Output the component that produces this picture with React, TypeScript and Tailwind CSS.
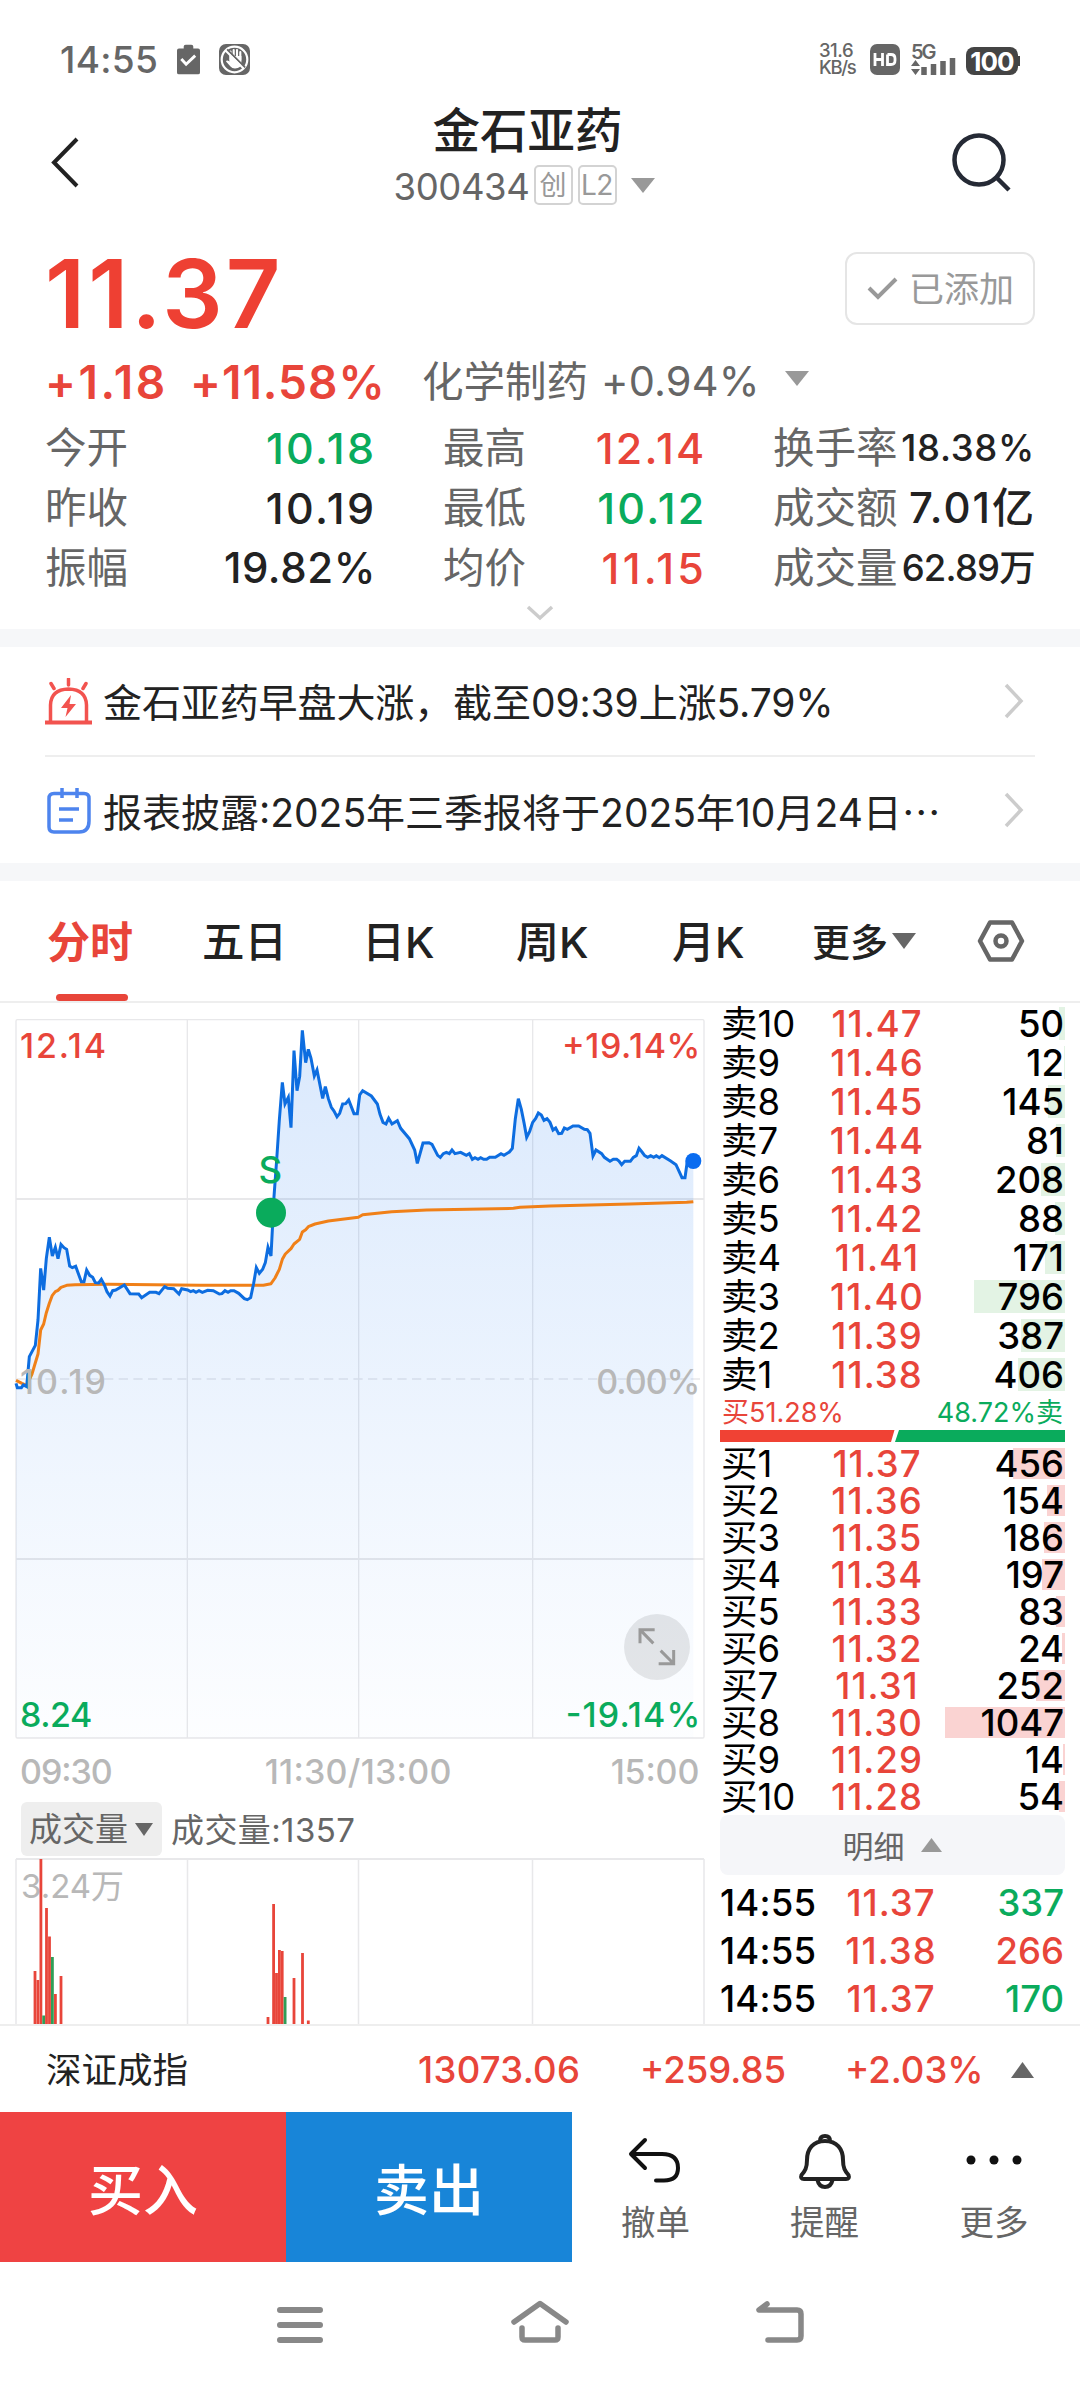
import React from "react";

const RED = "#e8453a";
const GREEN = "#0aab5c";

const tone: Record<string, string> = {
  r: "text-[#e8453a]",
  g: "text-[#0aab5c]",
  k: "text-[#222222]",
};

type Stat = { label: string; value: string; c: string; size: string };

const stats: Stat[][] = [
  [
    { label: "今开", value: "10.18", c: "g", size: "text-[43px] tracking-[2.4px] -mr-[3.5px]" },
    { label: "最高", value: "12.14", c: "r", size: "text-[43px] tracking-[2.2px] -mr-[2.4px]" },
    { label: "换手率", value: "18.38%", c: "k", size: "text-[36.5px] tracking-[0.7px]" },
  ],
  [
    { label: "昨收", value: "10.19", c: "k", size: "text-[43px] tracking-[2.4px] -mr-[3.5px]" },
    { label: "最低", value: "10.12", c: "g", size: "text-[43px] tracking-[2.2px] -mr-[2.4px]" },
    { label: "成交额", value: "7.01亿", c: "k", size: "text-[42px] tracking-[2px] -mr-[1px]" },
  ],
  [
    { label: "振幅", value: "19.82%", c: "k", size: "text-[42px] tracking-[0.6px] -mr-[3px]" },
    { label: "均价", value: "11.15", c: "r", size: "text-[43px] tracking-[3.2px] -mr-[3px]" },
    { label: "成交量", value: "62.89万", c: "k", size: "text-[36.5px] tracking-[-0.8px]" },
  ],
];

const sells: [string, string, number][] = [
  ["卖10", "11.47", 50], ["卖9", "11.46", 12], ["卖8", "11.45", 145], ["卖7", "11.44", 81], ["卖6", "11.43", 208],
  ["卖5", "11.42", 88], ["卖4", "11.41", 171], ["卖3", "11.40", 796], ["卖2", "11.39", 387], ["卖1", "11.38", 406],
];
const buys: [string, string, number][] = [
  ["买1", "11.37", 456], ["买2", "11.36", 154], ["买3", "11.35", 186], ["买4", "11.34", 197], ["买5", "11.33", 83],
  ["买6", "11.32", 24], ["买7", "11.31", 252], ["买8", "11.30", 1047], ["买9", "11.29", 14], ["买10", "11.28", 54],
];
const ticks: [string, string, string, string][] = [
  ["14:55", "11.37", "337", "g"],
  ["14:55", "11.38", "266", "r"],
  ["14:55", "11.37", "170", "g"],
];

const pricePoints =
  "48,1150 52,1163 64,1163 70,1155 80,1160 88,1070 106,1036 114,960 122,805 131,870 139,775 148,712 157,768 166,742 174,776 183,733 192,743 200,748 209,798 217,803 227,799 244,845 252,845 260,810 269,826 278,832 286,848 296,849 304,838 313,855 321,875 330,888 338,872 347,870 373,855 390,881 416,882 425,893 449,877 468,877 477,881 494,860 503,865 521,866 537,882 545,866 563,870 572,875 580,872 588,877 597,872 607,877 623,871 640,872 658,882 666,881 675,872 684,877 692,872 702,872 716,880 733,896 742,899 752,893 761,850 769,803 778,820 788,808 796,788 804,742 813,768 817,690 822,590 830,480 838,360 847,247 855,312 865,292 873,383 882,152 891,272 899,230 907,91 917,188 925,148 933,175 943,228 951,210 968,295 976,260 985,296 994,322 1002,333 1011,350 1019,340 1028,312 1037,311 1046,300 1062,341 1072,341 1079,285 1088,272 1114,288 1132,312 1140,343 1149,367 1158,372 1166,355 1176,372 1192,362 1202,385 1228,416 1244,450 1252,490 1269,429 1287,428 1296,433 1313,466 1321,472 1330,461 1339,457 1348,461 1356,450 1365,461 1382,457 1399,466 1408,461 1417,478 1425,473 1434,478 1442,473 1451,478 1460,478 1469,472 1486,472 1503,461 1512,466 1528,456 1537,445 1546,356 1555,296 1564,328 1572,368 1580,412 1589,394 1598,367 1607,355 1615,339 1624,345 1632,361 1641,356 1650,367 1659,390 1667,384 1676,401 1685,400 1693,384 1702,388 1719,378 1736,378 1753,388 1762,389 1770,400 1779,468 1788,450 1805,461 1813,472 1830,484 1840,478 1850,478 1857,483 1865,494 1874,484 1891,484 1900,472 1909,467 1917,445 1926,456 1934,467 1943,472 1952,467 1961,472 1969,467 1978,473 1986,467 2012,483 2028,494 2046,533 2055,533 2062,483 2080,483";
const averagePoints =
  "48,1141 66,1150 80,1156 96,1122 104,1095 114,1062 122,990 131,972 139,938 148,910 157,886 166,875 174,871 183,862 200,856 225,854 325,853 600,856 790,856 813,851 825,834 838,808 847,778 856,762 873,746 882,732 899,718 907,696 917,689 925,680 945,672 985,663 1075,652 1088,644 1175,635 1280,630 1540,625 1560,622 1650,618 1890,612 2060,607 2080,605";

const volumes: [number, number, string][] = [
  [35, 53, RED], [37.9, 44, RED], [40.9, 165, RED], [43.7, 8.5, "#2f9e58"], [46.5, 116, RED], [49.5, 87.5, RED],
  [52.4, 67, "#2f9e58"], [55.4, 30, RED], [61, 48, RED],
  [268, 7, RED], [273.6, 120, RED], [276.5, 51, RED], [279.4, 74, RED], [282.2, 73, RED], [285.1, 27, "#2f9e58"],
  [294, 46, RED], [302.5, 71, RED], [308.3, 3.5, RED],
];

function Tri({ w, h, color, up = false }: { w: number; h: number; color: string; up?: boolean }) {
  return (
    <svg width={w} height={h} viewBox="0 0 20 12" preserveAspectRatio="none" className="shrink-0">
      <path d={up ? "M0 12L10 0L20 12Z" : "M0 0L10 12L20 0Z"} fill={color} />
    </svg>
  );
}

function StatusBar() {
  return (
    <div className="flex h-[92px] items-end justify-between pr-[60px] pb-[17px] pl-[60px] text-[#666666]">
      <div className="flex h-[32px] items-center">
        <span className="w-[117px] text-[37px] leading-none font-medium tracking-[0.3px]">14:55</span>
        <svg width="23" height="31" viewBox="0 0 24 31">
          <path d="M2 4H7V2Q7 0 9 0H15Q17 0 17 2V4H22Q24 4 24 6V29Q24 31 22 31H2Q0 31 0 29V6Q0 4 2 4Z" fill="#666" />
          <path d="M4.500 15L9.500 20.500L19 11.500" stroke="#fff" strokeWidth="3" fill="none" />
        </svg>
        <svg width="31" height="31" viewBox="0 0 31 31" className="ml-[19px]">
          <rect width="31" height="31" rx="7" fill="#666" />
          <circle cx="15.500" cy="15.500" r="12.800" stroke="#fff" strokeWidth="2.200" fill="none" />
          <path d="M11.500 16V7.500M14.700 15V6M18 15V6M21.300 16V8" stroke="#fff" strokeWidth="2.100" strokeLinecap="round" />
          <path d="M10.500 12H22.400V18Q22.400 24.500 16 24.500Q13 24.500 11.500 22.500L7 17.500Q7.500 15.500 10.500 17.500Z" fill="#fff" />
          <path d="M8 5.500L26 23.500" stroke="#666" strokeWidth="2" />
          <path d="M6.500 6.500L24.500 24.500" stroke="#fff" strokeWidth="2" />
        </svg>
      </div>
      <div className="flex h-[32px] items-center">
        <div className="flex w-[51px] flex-col text-[18.5px] leading-[17px] font-medium tracking-[-0.5px]">
          <span>31.6</span>
          <span className="tracking-[-1.3px]">KB/s</span>
        </div>
        <svg width="30" height="31" viewBox="0 0 30 31">
          <rect width="30" height="31" rx="7" fill="#666" />
          <path d="M5 9V22M12.500 9V22M5 15.500H12.500M17.500 10.500V20.500H21Q25 20.500 25 16.500V14.500Q25 10.500 21 10.500H17.500" stroke="#fff" strokeWidth="2.800" fill="none" />
        </svg>
        <div className="relative ml-[11px] h-[31px] w-[46px]">
          <span className="absolute -top-[2px] left-0 text-[20px] leading-[20px] font-semibold tracking-[-2px]">5G</span>
          <svg width="46" height="31" viewBox="0 0 46 31" className="absolute inset-0">
            <path d="M0 22L4.500 16L9 22ZM0 25L4.500 31L9 25Z" fill="#666" />
            <path d="M13 23V31M22.500 20V31M32 17V31M41.500 14V31" stroke="#666" strokeWidth="5.500" />
          </svg>
        </div>
        <div className="ml-[9px] flex h-[28px] w-[52px] items-center justify-center self-end rounded-[8px] bg-[#444444] text-[26px] font-bold tracking-[-1px] text-white">
          100
        </div>
        <div className="mt-[3px] h-[10px] w-[2px] bg-[#444444]" />
      </div>
    </div>
  );
}

function Header() {
  return (
    <div className="flex h-[134px] justify-between">
      <svg width="100" height="134" viewBox="0 0 100 134">
        <path d="M77 47L54 70.500L77 94" stroke="#222" strokeWidth="4" fill="none" />
      </svg>
      <div className="flex w-[400px] flex-col items-center pr-[2px]">
        <div className="mt-[11px] pl-[7px] text-[47.500px] leading-[56px] font-medium text-[#222222]">金石亚药</div>
        <div className="mt-[5px] flex h-[42px] items-center">
          <span className="mt-[5px] w-[140px] text-[36.5px] leading-none tracking-[-0.4px] text-[#666666]">300434</span>
          <span className="flex h-[40px] w-[39px] items-center justify-center rounded-[5px] border-2 border-[#d3d3d3] text-[27px] leading-none text-[#999999]">
            创
          </span>
          <span className="ml-[5px] flex h-[40px] w-[39px] items-center justify-center rounded-[5px] border-2 border-[#d3d3d3] text-[28px] leading-none tracking-[-0.5px] text-[#999999]">
            L2
          </span>
          <span className="ml-[14px]"><Tri w={24} h={15} color="#999" /></span>
        </div>
      </div>
      <svg width="130" height="134" viewBox="950 92 130 134">
        <circle cx="979" cy="160" r="24.500" stroke="#252a35" strokeWidth="4.500" fill="none" />
        <path d="M996 177L1009 190" stroke="#252a35" strokeWidth="4.500" />
      </svg>
    </div>
  );
}

function Quote() {
  return (
    <div className="h-[403px] px-[45px]">
      <div className="flex h-[120px] justify-between">
        <div className="mt-[18px] text-[95px] leading-[100px] font-semibold tracking-[3px] text-[#ee4033]">11.37</div>
        <div className="mt-[26px] flex h-[73px] w-[190px] items-center rounded-[12px] border-2 border-[#e5e5e5] pl-[20px]">
          <svg width="31" height="23" viewBox="0 0 31 23">
            <path d="M2 11L11 20L29 2" stroke="#999" strokeWidth="4" fill="none" />
          </svg>
          <span className="mt-[2px] ml-[11px] text-[35px] leading-none text-[#999999]">已添加</span>
        </div>
      </div>
      <div className="mt-[8px] flex h-[56px] items-center leading-none">
        <span className="w-[145px] text-[46px] font-semibold tracking-[2.6px] text-[#e8453a]">+1.18</span>
        <span className="w-[232px] text-[46px] font-semibold tracking-[1px] text-[#e8453a]">+11.58%</span>
        <span className="w-[179px] pt-[2px] text-[41.500px] text-[#666666]">化学制药</span>
        <span className="w-[184px] text-[41.500px] tracking-[0.2px] text-[#666666]">+0.94%</span>
        <span className="-mt-[8px]"><Tri w={24} h={15} color="#999" /></span>
      </div>
      <div className="pt-[6px]">
        {stats.map((row, i) => (
          <div key={i} className="mt-[4px] flex h-[56px] items-center leading-none">
            {row.map((s, j) => (
              <div
                key={s.label}
                className={
                  j === 0
                    ? "flex w-[328px] items-center justify-between"
                    : j === 1
                      ? "ml-[70px] flex w-[261px] items-center justify-between"
                      : "ml-[69px] flex flex-1 items-center justify-between"
                }
              >
                <span className="pt-[1px] text-[41.500px] whitespace-nowrap text-[#666666]">{s.label}</span>
                <span className={tone[s.c] + " font-medium whitespace-nowrap " + s.size}>{s.value}</span>
              </div>
            ))}
          </div>
        ))}
      </div>
      <div className="flex h-[30px] justify-center pt-[9px]">
        <svg width="28" height="16" viewBox="0 0 28 16">
          <path d="M2 2L14 13L26 2" stroke="#ccc" strokeWidth="3.500" fill="none" />
        </svg>
      </div>
    </div>
  );
}

function Chevron() {
  return (
    <svg width="20" height="36" viewBox="0 0 20 36" className="mr-[11px] ml-auto">
      <path d="M2 2L17 18L2 34" stroke="#ccc" strokeWidth="3.500" fill="none" />
    </svg>
  );
}

function News() {
  return (
    <div className="h-[216px] px-[45px] text-[39px] leading-none text-[#222222]">
      <div className="flex h-[110px] items-center border-b-2 border-[#eeeeee]">
        <svg width="47" height="47" viewBox="0 0 47 47">
          <g stroke="#f2534f" fill="none" strokeWidth="3.500">
            <path d="M0 44.500H47" strokeWidth="4" />
            <path d="M5.500 43V27Q6 11.500 23.500 11Q41 11.500 41.500 27V43" />
            <path d="M23.500 1V7M6 5.500L9 10.500M41 5.500L38 10.500" strokeLinecap="round" />
          </g>
          <path d="M26 17L16 30H22.500L20.500 39L31 26H24.500Z" fill="#f2534f" />
        </svg>
        <span className="mt-[3px] ml-[11px] tracking-[-0.1px]">金石亚药早盘大涨，截至09:39上涨5.79%</span>
        <Chevron />
      </div>
      <div className="flex h-[106px] items-center">
        <svg width="44" height="47" viewBox="0 0 44 47" className="ml-[2px]">
          <g stroke="#4d84ee" fill="none" strokeWidth="3.500">
            <path d="M7 6.500H37Q42 6.500 42 11.500V34Q42 45 32 45H7Q2 45 2 40V11.500Q2 6.500 7 6.500Z" />
            <path d="M15 1V11M30 1V11M12 22H32M12 33H26" />
          </g>
        </svg>
        <span className="mt-[3px] ml-[12px]">
          报表披露:2025年三季报将于2025年10月24日<span className="font-['Noto_Sans_CJK_SC']">⋯</span>
        </span>
        <Chevron />
      </div>
    </div>
  );
}

function Tabs() {
  return (
    <div className="flex h-[122px] items-center border-b-2 border-[#eeeeee] text-[43px] leading-none font-medium text-[#222222]">
      <div className="flex h-full w-[202px] flex-col justify-end pl-[47px] font-bold text-[#e8453a]">
        <span className="mb-[30px]">分时</span>
        <span className="ml-[9px] h-[7px] w-[72px] rounded-full bg-[#e8453a]" />
      </div>
      <span className="mt-[2px] w-[160px] text-[42.500px]">五日</span>
      <span className="mt-[2px] w-[154px]">日K</span>
      <span className="mt-[2px] w-[156px]">周K</span>
      <span className="mt-[2px] w-[140px]">月K</span>
      <span className="mt-[1px] text-[38px]">更多</span>
      <span className="ml-[4px]"><Tri w={24} h={16} color="#666" /></span>
      <svg width="48" height="42" viewBox="0 0 48 42" className="ml-[61px]">
        <path d="M13 2.500H35L45 21L35 39.500H13L3 21Z" stroke="#666" strokeWidth="4.500" fill="none" strokeLinejoin="round" />
        <circle cx="24" cy="21" r="5.500" stroke="#666" strokeWidth="4.500" fill="none" />
      </svg>
    </div>
  );
}

function PriceChart() {
  return (
    <svg width="710" height="794" viewBox="0 9 2130 2382" fontSize="102" fontWeight="500">
      <defs>
        <linearGradient id="area" gradientUnits="userSpaceOnUse" x1="0" y1="91" x2="0" y2="2214">
          <stop offset="0" stopColor="#0a6cf0" stopOpacity="0.15" />
          <stop offset="1" stopColor="#0a6cf0" stopOpacity="0.01" />
        </linearGradient>
      </defs>
      <g stroke="#e8e8ea" strokeWidth="4" fill="none">
        <rect x="48" y="59" width="2064" height="2155" rx="4" />
        <path d="M562 59V2214M1076 59V2214M1598 59V2214" />
        <path d="M48 597H2112M48 1677H2112" strokeWidth="6" />
        <path d="M48 1137H2112" strokeDasharray="28 16" strokeWidth="5" />
      </g>
      <polygon points={pricePoints + " 2080,2214 48,2214"} fill="url(#area)" />
      <polyline points={averagePoints} stroke="#f08018" strokeWidth="9" fill="none" strokeLinejoin="round" />
      <polyline points={pricePoints} stroke="#0d6de0" strokeWidth="9" fill="none" />
      <circle cx="2080" cy="483" r="24" fill="#0a6cf0" />
      <circle cx="813" cy="638" r="45" fill={GREEN} />
      <text x="811" y="549" fontSize="110" fill={GREEN} textAnchor="middle">S</text>
      <text x="60" y="174" fill={RED} textLength="258">12.14</text>
      <text x="2101" y="174" fill={RED} textAnchor="end" textLength="415">+19.14%</text>
      <g fill="#b8b8b8">
        <text x="60" y="1181" textLength="258">10.19</text>
        <text x="2101" y="1181" textAnchor="end" textLength="312">0.00%</text>
        <text x="60" y="2351" textLength="278">09:30</text>
        <text x="1074" y="2351" textAnchor="middle" textLength="560">11:30/13:00</text>
        <text x="2098" y="2351" textAnchor="end" textLength="266">15:00</text>
      </g>
      <text x="60" y="2181" fill={GREEN} textLength="217">8.24</text>
      <text x="2101" y="2181" fill={GREEN} textAnchor="end" textLength="404">-19.14%</text>
      <circle cx="1971" cy="1941" r="99" fill="#000" fillOpacity="0.09" />
      <path
        d="M1920 1930V1889H1964M1922 1891L1960 1930M2021 1950V1991H1976M2019 1989L1982 1952"
        stroke="#999" strokeWidth="9" fill="none"
      />
    </svg>
  );
}

function Volume() {
  return (
    <div>
      <div className="flex h-[61px] items-center pt-[3px] pl-[21px] text-[33px] leading-none text-[#666666]">
        <div className="flex h-[54px] w-[141px] items-center rounded-[6px] bg-[#eeeeee] pt-[1px] pl-[8px]">
          成交量
          <span className="ml-[7px]"><Tri w={18} h={13} color="#666" /></span>
        </div>
        <span className="mt-[2px] ml-[9px] tracking-[0.4px]">成交量:1357</span>
      </div>
      <svg width="710" height="166" viewBox="0 0 710 166">
        <text x="21" y="40" fontSize="33" fill="#b8b8b8">3.24万</text>
        <g stroke="#e8e8ea" fill="none" strokeWidth="1.500">
          <path d="M16 1V166M187.500 1V166M358.500 1V166M532.500 1V166M704 1V166" />
          <path d="M16 1H704" strokeWidth="2" />
        </g>
        {volumes.map(([x, h, color], i) => (
          <rect key={i} x={x - 1.4} y={166 - h} width="2.800" height={h} fill={color} />
        ))}
      </svg>
    </div>
  );
}

function Level({ row, side }: { row: [string, string, number]; side: "sell" | "buy" }) {
  return (
    <div className={"relative flex items-center pt-[2px] leading-none " + (side === "sell" ? "h-[33px]" : "h-[31px]")}>
      <span
        className={"absolute inset-y-0 right-0 " + (side === "sell" ? "bg-[#e3f3e4]" : "bg-[#fad3d2]")}
        style={{ width: row[2] * 0.1146 }}
      />
      <span className="relative w-[96px] pl-px font-normal">{row[0]}</span>
      <span className="relative w-[122px] text-center tracking-[1px] text-[#e8453a]">{row[1]}</span>
      <span className="relative flex-1 pr-px text-right">{row[2]}</span>
    </div>
  );
}

function OrderBook() {
  return (
    <div className="w-[345px] text-[36.5px] font-medium text-black">
      <div className="flex flex-col gap-[6px] pt-[4px]">
        {sells.map((r) => <Level key={r[0]} row={r} side="sell" />)}
      </div>
      <div className="flex h-[39px] items-center justify-between px-[2px] pt-[3px] text-[27px] leading-none font-normal">
        <span className="text-[#e8453a]">买51.28%</span>
        <span className="text-[#0aab5c]">48.72%卖</span>
      </div>
      <svg width="345" height="12" viewBox="0 0 345 12" className="block">
        <path d="M0 0H174.500L171 12H0Z" fill="#f04234" />
        <path d="M179 0H345V12H175Z" fill={GREEN} />
      </svg>
      <div className="flex flex-col gap-[6px] pt-[6px]">
        {buys.map((r) => <Level key={r[0]} row={r} side="buy" />)}
      </div>
      <div className="mt-[3px] flex h-[60px] items-center justify-center rounded-[8px] bg-[#f5f6f9] pr-[1px] text-[31px] leading-none font-normal text-[#666666]">
        <span className="pt-[2px]">明细</span>
        <span className="ml-[16px]"><Tri w={21} h={14} color="#999" up /></span>
      </div>
      <div className="pt-[4px]">
        {ticks.map(([t, p, v, c], i) => (
          <div key={i} className="flex h-[48px] items-center leading-none">
            <span className="w-[110px] tracking-[0.2px]">{t}</span>
            <span className="w-[122px] text-center tracking-[1px] text-[#e8453a]">{p}</span>
            <span className={"flex-1 pr-px text-right " + tone[c]}>{v}</span>
          </div>
        ))}
      </div>
    </div>
  );
}

function IndexBar() {
  return (
    <div className="flex h-[88px] items-center border-t-2 border-[#eeeeee] pt-[2px] pl-[46px] text-[36.5px] leading-none font-medium text-[#e8453a]">
      <span className="w-[372px] pt-[1px] text-[35.5px] font-normal text-[#222222]">深证成指</span>
      <span className="w-[222px] tracking-[0.3px]">13073.06</span>
      <span className="w-[205px]">+259.85</span>
      <span className="w-[166px]">+2.03%</span>
      <Tri w={23} h={16} color="#666" up />
    </div>
  );
}

function Actions() {
  return (
    <div className="flex h-[150px] items-stretch text-[34.500px] leading-none text-[#666666]">
      <button className="w-[286px] bg-[#ef4343] pt-[6px] text-[55px] font-medium text-white">买入</button>
      <button className="w-[286px] bg-[#1885d8] pt-[6px] text-[55px] font-medium text-white">卖出</button>
      <div className="flex w-[167px] flex-col items-center pt-[18px]">
        <svg width="60" height="60" viewBox="0 0 60 60">
          <path d="M19 10L5 24L19 38M6 24H36Q52 24 52 38Q52 50.500 38 50.500H30" stroke="#111" strokeWidth="4" fill="none" strokeLinecap="round" strokeLinejoin="round" />
        </svg>
        <span className="mt-[16px]">撤单</span>
      </div>
      <div className="flex w-[171px] flex-col items-center pt-[18px]">
        <svg width="60" height="60" viewBox="0 0 60 60">
          <g stroke="#222" strokeWidth="4" fill="none" strokeLinejoin="round">
            <path d="M30 11C18 11 12 19 12 30C12 38 10 41 6.500 45Q5 49 9 49H51Q55 49 53.500 45C50 41 48 38 48 30C48 19 42 11 30 11Z" />
            <path d="M25 11Q25 6 30 6Q35 6 35 11M22.500 50Q24 57 30 57Q36 57 37.500 50" />
          </g>
        </svg>
        <span className="mt-[16px]">提醒</span>
      </div>
      <div className="flex w-[168px] flex-col items-center pt-[18px]">
        <svg width="60" height="60" viewBox="0 0 60 60">
          <g fill="#111">
            <circle cx="7" cy="30" r="4.500" />
            <circle cx="30" cy="30" r="4.500" />
            <circle cx="53" cy="30" r="4.500" />
          </g>
        </svg>
        <span className="mt-[16px]">更多</span>
      </div>
    </div>
  );
}

function NavBar() {
  return (
    <div className="flex h-[126px] items-start justify-between px-[270px] pt-[33px]">
      <svg width="60" height="54" viewBox="0 0 60 54">
        <path d="M10 15H50M10 30H50M10 45H50" stroke="#888" strokeWidth="6" strokeLinecap="round" />
      </svg>
      <svg width="64" height="54" viewBox="0 0 64 54">
        <g stroke="#888" strokeWidth="5.500" fill="none" strokeLinecap="round" strokeLinejoin="round">
          <path d="M6 27L32 8.500L58 27" />
          <path d="M14 33V42Q14 45 17 45H47Q50 45 50 42V33" />
        </g>
      </svg>
      <svg width="60" height="54" viewBox="0 0 60 54">
        <path d="M17 9L9 15H47Q51 15 51 19V41Q51 45 47 45H18" stroke="#888" strokeWidth="5.500" fill="none" strokeLinecap="round" strokeLinejoin="round" />
      </svg>
    </div>
  );
}

export default function App() {
  return (
    <div className="flex h-[2388px] w-[1080px] flex-col overflow-hidden bg-white font-['Inter','Noto_Sans_CJK_SC',sans-serif]">
      <StatusBar />
      <Header />
      <Quote />
      <div className="h-[18px] bg-[#f6f7f9]" />
      <News />
      <div className="h-[18px] bg-[#f6f7f9]" />
      <Tabs />
      <div className="flex h-[1021px] overflow-hidden">
        <div className="flex w-[720px] flex-col">
          <PriceChart />
          <Volume />
        </div>
        <OrderBook />
      </div>
      <IndexBar />
      <Actions />
      <NavBar />
    </div>
  );
}
